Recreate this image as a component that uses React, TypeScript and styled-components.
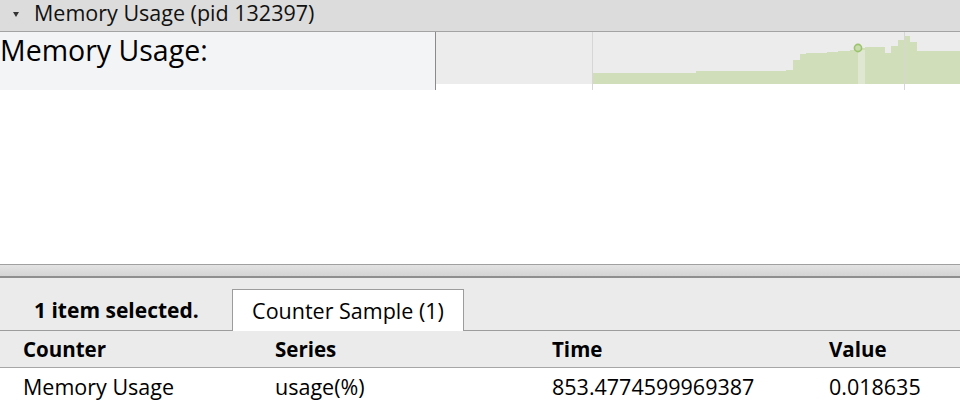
import React from "react";
import styled, { createGlobalStyle } from "styled-components";

const GlobalStyle = createGlobalStyle`
  html, body { margin: 0; padding: 0; background: #ffffff; }
  body { font-family: "Open Sans", "Noto Sans", sans-serif; color: #000; }
  * { box-sizing: border-box; }
`;

const Page = styled.div`
  width: 960px;
  height: 403px;
  overflow: hidden;
  display: flex;
  flex-direction: column;
  background: #ffffff;
`;

const TrackHeader = styled.div`
  height: 32px;
  flex: none;
  display: flex;
  align-items: flex-start;
  padding: 0 0 6px 13px;
  background: #dcdcdc;
  border-bottom: 1px solid #a3a3a3;
`;

const Caret = styled.svg`
  width: 6px;
  height: 5px;
  margin: 12px 15px 0 0;
  flex: none;
`;

const TrackTitle = styled.span`
  font-size: 21.5px;
  line-height: 25px;
  white-space: nowrap;
  color: #111;
`;

const TrackRow = styled.div`
  height: 58px;
  flex: none;
  display: flex;
`;

const TrackLabel = styled.div`
  width: 436px;
  flex: none;
  background: #f3f4f6;
  border-right: 1px solid #8a8a8a;
  font-size: 28.5px;
  line-height: 36px;
  white-space: nowrap;
`;

const ChartArea = styled.div`
  flex: 1;
`;

const ChartSvg = styled.svg`
  display: block;
  width: 524px;
  height: 58px;
`;

const Blank = styled.div`
  height: 174px;
  flex: none;
  background: #ffffff;
`;

const Splitter = styled.div`
  height: 14px;
  flex: none;
  border-top: 1px solid #a0a0a0;
  border-bottom: 2px solid #8e8e8e;
  background: linear-gradient(#e3e3e3, #d4d4d4);
`;

const Panel = styled.div`
  flex: 1;
  display: flex;
  flex-direction: column;
  background: #ebebeb;
`;

const TabBar = styled.div`
  height: 53px;
  flex: none;
  display: flex;
  align-items: flex-end;
  border-bottom: 1px solid #9c9c9c;
`;

const SelectionLabel = styled.div`
  height: 41px;
  width: 232px;
  display: flex;
  align-items: center;
  padding-left: 34px;
  font-size: 21px;
  font-weight: 700;
  white-space: nowrap;
`;

const Tab = styled.div`
  height: 42px;
  width: 232px;
  display: flex;
  align-items: center;
  justify-content: center;
  background: #ffffff;
  border: 1px solid #9c9c9c;
  border-bottom: none;
  font-size: 21.5px;
  white-space: nowrap;
  margin-bottom: -1px;
`;

const Row = styled.div<{ $header?: boolean }>`
  height: ${(p) => (p.$header ? "37px" : "36px")};
  flex: none;
  display: grid;
  grid-template-columns: 252px 277px 277px 1fr;
  align-items: center;
  padding-left: 23px;
  background: ${(p) => (p.$header ? "#ebebeb" : "#ffffff")};
  border-bottom: ${(p) => (p.$header ? "1px solid #a6a6a6" : "none")};
  font-size: ${(p) => (p.$header ? "20.5px" : "21.5px")};
  font-weight: ${(p) => (p.$header ? 700 : 400)};
  white-space: nowrap;
`;

const Cell = styled.span``;

const X0 = 436;
const Y0 = 32;

const steps: [number, number][] = [
  [592, 73],
  [696, 71],
  [786, 70],
  [793, 60],
  [800, 54],
  [806, 53],
  [827, 52],
  [838, 51],
  [850, 50],
  [855, 49],
  [858, 48],
  [865, 47],
  [885, 53],
  [891, 46],
  [898, 40],
  [904, 36],
  [910, 42],
  [917, 51],
];

function buildPath() {
  const bottom = 84 - Y0;
  let d = `M ${steps[0][0] - X0} ${bottom}`;
  steps.forEach(([x, y], i) => {
    const nx = i + 1 < steps.length ? steps[i + 1][0] : 960;
    d += ` L ${x - X0} ${y - Y0} L ${nx - X0} ${y - Y0}`;
  });
  d += ` L ${960 - X0} ${bottom} Z`;
  return d;
}

const rows = [
  { counter: "Memory Usage", series: "usage(%)", time: "853.4774599969387", value: "0.018635" },
];

export default function App() {
  return (
    <>
      <GlobalStyle />
      <Page>
        <TrackHeader>
          <Caret viewBox="0 0 6 5">
            <polygon points="0,0 6,0 3,5" fill="#333" />
          </Caret>
          <TrackTitle>Memory Usage (pid 132397)</TrackTitle>
        </TrackHeader>
        <TrackRow>
          <TrackLabel>Memory Usage:</TrackLabel>
          <ChartArea>
            <ChartSvg viewBox="0 0 524 58">
              <rect x="0" y="0" width="524" height="52" fill="#ececec" />
              <path d={buildPath()} fill="#d0dfb9" />
              <rect x={858 - X0} y={50 - Y0} width="7" height={34} fill="#dfe7d3" />
              <line x1={592.5 - X0} y1="0" x2={592.5 - X0} y2="58" stroke="#d6d6d6" strokeWidth="1" />
              <line x1={904.5 - X0} y1="0" x2={904.5 - X0} y2="58" stroke="#d6d6d6" strokeWidth="1" />
              <circle cx={858 - X0} cy={48 - Y0} r="3.6" fill="#c9dcae" stroke="#9cc46d" strokeWidth="1.6" />
            </ChartSvg>
          </ChartArea>
        </TrackRow>
        <Blank />
        <Splitter />
        <Panel>
          <TabBar>
            <SelectionLabel>1 item selected.</SelectionLabel>
            <Tab>Counter Sample (1)</Tab>
          </TabBar>
          <Row $header>
            <Cell>Counter</Cell>
            <Cell>Series</Cell>
            <Cell>Time</Cell>
            <Cell>Value</Cell>
          </Row>
          {rows.map((r) => (
            <Row key={r.time}>
              <Cell>{r.counter}</Cell>
              <Cell>{r.series}</Cell>
              <Cell>{r.time}</Cell>
              <Cell>{r.value}</Cell>
            </Row>
          ))}
        </Panel>
      </Page>
    </>
  );
}
